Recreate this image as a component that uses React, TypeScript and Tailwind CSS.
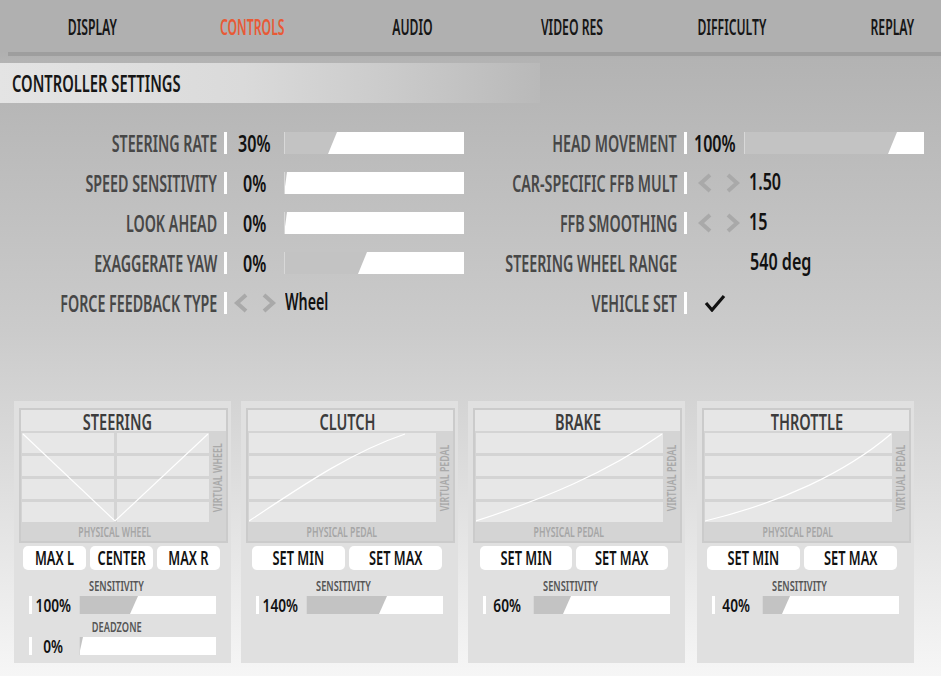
import React from "react";

const F = "font-['Noto_Sans',sans-serif]";

function Slider({ w, h, fill, slant, cls }: { w: number; h: number; fill: number; slant: number; cls: string }) {
  const bottom = Math.max(0, fill - slant);
  return (
    <div className={`relative shrink-0 bg-white ${cls}`}>
      <svg width={w} height={h} className="absolute left-0 top-0 block">
        <polygon points={`0,0 ${fill},0 ${bottom},${h} 0,${h}`} fill="#c3c3c3" />
        <rect x="0" y="0" width="1" height={h} fill="#d8d8d8" />
      </svg>
    </div>
  );
}

function Chevron({ dir }: { dir: "l" | "r" }) {
  return (
    <svg width="16" height="20" viewBox="0 0 16 20" className="block">
      {dir === "l" ? (
        <polyline points="13,2 4,10 13,18" fill="none" stroke="#a9a9a9" strokeWidth="4" />
      ) : (
        <polyline points="3,2 12,10 3,18" fill="none" stroke="#a9a9a9" strokeWidth="4" />
      )}
    </svg>
  );
}

function Sep({ hidden }: { hidden?: boolean }) {
  return <div className={`ml-[7px] shrink-0 w-[3px] h-[22px] ${hidden ? "" : "bg-white"}`} />;
}

function Label({ text }: { text: string }) {
  return (
    <div className="w-[217px] shrink-0 flex justify-end">
      <span className="shrink-0 whitespace-nowrap origin-right scale-x-[0.62] text-[23px] leading-none text-[#474747] font-semibold">
        {text}
      </span>
    </div>
  );
}

function Value({ text }: { text: string }) {
  return (
    <span className="inline-block whitespace-nowrap origin-left scale-x-[0.7] text-[23px] leading-none text-[#111] font-semibold">
      {text}
    </span>
  );
}

function SliderRow({ label, value, fill }: { label: string; value: string; fill: number }) {
  return (
    <div className="flex items-center h-[40px]">
      <Label text={label} />
      <Sep />
      <div className="w-[55px] shrink-0 flex justify-center">
        <span className="shrink-0 whitespace-nowrap scale-x-[0.7] text-[23px] leading-none text-[#111] font-semibold">
          {value}
        </span>
      </div>
      <div className="w-[2px] shrink-0" />
      <Slider w={180} h={22} fill={fill} slant={9} cls="w-[180px] h-[22px]" />
    </div>
  );
}

function ArrowRow({ label, value, ml, wheel }: { label: string; value: string; ml: string; wheel?: boolean }) {
  return (
    <div className="flex items-center h-[40px]">
      <Label text={label} />
      <Sep />
      <div className={`flex items-center ${ml}`}>
        <Chevron dir="l" />
        <div className="ml-[12px]">
          <Chevron dir="r" />
        </div>
        <div className="ml-[8px]">
          {wheel ? (
            <span className="inline-block whitespace-nowrap origin-left scale-x-[0.62] text-[23px] leading-none text-[#111] font-semibold">
              {value}
            </span>
          ) : (
            <Value text={value} />
          )}
        </div>
      </div>
    </div>
  );
}

function Cells({ cols }: { cols: number }) {
  const rows = [0, 1, 2, 3];
  return (
    <div className="flex flex-col gap-[3px]">
      {rows.map((r) =>
        cols === 2 ? (
          <div key={r} className="flex gap-[3px]">
            <div className="w-[92px] h-[20px] bg-[#e7e7e7]" />
            <div className="w-[92px] h-[20px] bg-[#e7e7e7]" />
          </div>
        ) : (
          <div key={r} className="w-[187px] h-[20px] bg-[#e7e7e7]" />
        )
      )}
    </div>
  );
}

function Panel({
  title,
  cols,
  path,
  vlabel,
  hlabel,
  buttons,
  sliders,
  btnCls,
  btnRow,
  titleCls,
  outer,
}: {
  title: string;
  cols: number;
  path: string;
  vlabel: string;
  hlabel: string;
  buttons: string[];
  sliders: { label: string; value: string; fill: number }[];
  btnCls: string;
  btnRow: string;
  titleCls: string;
  outer: string;
}) {
  return (
    <div className={`w-[217px] h-[262px] shrink-0 bg-[#e0e0e0] pt-[7px] pl-[5px] ${outer}`}>
      <div className="w-[209px] h-[135px] border-2 border-[#cbcbcb] bg-[#d4d4d4] flex flex-col">
        <div className={`h-[21px] bg-[#e6e6e6] flex items-center justify-center ${titleCls}`}>
          <span className="shrink-0 whitespace-nowrap scale-x-[0.66] text-[22px] leading-none text-[#3c3c3c] font-semibold">
            {title}
          </span>
        </div>
        <div className="flex pt-[2px]">
          <div className="relative ml-[1px] w-[187px] h-[89px]">
            <Cells cols={cols} />
            <svg width="187" height="89" className="absolute left-0 top-0 block">
              <path d={path} fill="none" stroke="#ffffff" strokeWidth="1.2" />
            </svg>
          </div>
          <div className="w-[17px] h-[89px] flex items-center justify-center">
            <div className="[writing-mode:vertical-rl] rotate-180 flex items-center">
              <span className="shrink-0 whitespace-nowrap scale-y-[0.68] text-[13px] leading-none text-[#a9a9a9] font-semibold">
                {vlabel}
              </span>
            </div>
          </div>
        </div>
        <div className="w-[188px] flex-1 flex items-center justify-center">
          <span className="shrink-0 whitespace-nowrap scale-x-[0.62] text-[14px] leading-none text-[#a6a6a6] font-semibold">
            {hlabel}
          </span>
        </div>
      </div>
      <div className={`flex gap-[4px] mt-[3px] ${btnRow}`}>
        {buttons.map((b) => (
          <div key={b} className={`h-[24px] shrink-0 bg-white rounded-[5px] flex items-center justify-center overflow-visible ${btnCls}`}>
            <span className="shrink-0 whitespace-nowrap scale-x-[0.64] text-[20px] leading-none text-[#111] font-semibold">
              {b}
            </span>
          </div>
        ))}
      </div>
      {sliders.map((s, i) => (
        <div key={s.label} className={i === 0 ? "mt-[8px]" : "mt-[5px]"}>
          <div className="w-[196px] h-[16px] flex items-center justify-center">
            <span className="shrink-0 whitespace-nowrap scale-x-[0.66] text-[14px] leading-none text-[#555] font-semibold">
              {s.label}
            </span>
          </div>
          <div className="flex items-center h-[18px] mt-[2px]">
            <div className="ml-[10px] shrink-0 w-[3px] h-[18px] bg-white" />
            <div className="w-[42px] shrink-0 flex justify-center">
              <span className="shrink-0 whitespace-nowrap scale-x-[0.76] text-[18px] leading-none text-[#111] font-semibold">
                {s.value}
              </span>
            </div>
            <div className="w-[5px] shrink-0" />
            <Slider w={137} h={18} fill={s.fill} slant={8} cls="w-[137px] h-[18px]" />
          </div>
        </div>
      ))}
    </div>
  );
}

export default function App() {
  const tabs = ["DISPLAY", "CONTROLS", "AUDIO", "VIDEO RES", "DIFFICULTY", "REPLAY"];
  return (
    <div
      className={`w-[941px] h-[676px] overflow-hidden bg-[linear-gradient(to_bottom,#b0b0b0_0px,#b0b0b0_52px,#b3b3b3_60px,#cbcbcb_330px,#f6f6f6_676px)] ${F}`}
    >
      <div className="h-[52px] flex items-center pl-[12px] pb-[1px] overflow-hidden">
        {tabs.map((t) => (
          <div key={t} className="w-[160px] shrink-0 flex justify-center">
            <span
              className={`shrink-0 whitespace-nowrap scale-x-[0.555] text-[22px] leading-none font-semibold ${
                t === "CONTROLS" ? "text-[#e85a36]" : "text-[#161616]"
              }`}
            >
              {t}
            </span>
          </div>
        ))}
      </div>
      <div className="ml-[8px] h-[4px] bg-[#9e9e9e]" />
      <div className="mt-[7px] h-[40px] w-[540px] bg-[linear-gradient(to_right,#e4e4e4_0%,#dadada_45%,#c9c9c9_75%,#b9b9b9_100%)] flex items-center pl-[12px]">
        <span className="inline-block whitespace-nowrap origin-left scale-x-[0.64] text-[23px] leading-none text-[#161616] font-semibold">
          CONTROLLER SETTINGS
        </span>
      </div>
      <div className="mt-[20px] grid grid-cols-[460px_1fr]">
        <div className="flex flex-col">
          <SliderRow label="STEERING RATE" value="30%" fill={53} />
          <SliderRow label="SPEED SENSITIVITY" value="0%" fill={3} />
          <SliderRow label="LOOK AHEAD" value="0%" fill={3} />
          <SliderRow label="EXAGGERATE YAW" value="0%" fill={83} />
          <ArrowRow label="FORCE FEEDBACK TYPE" value="Wheel" ml="ml-[6px]" wheel />
        </div>
        <div className="flex flex-col">
          <SliderRow label="HEAD MOVEMENT" value="100%" fill={153} />
          <ArrowRow label="CAR-SPECIFIC FFB MULT" value="1.50" ml="ml-[10px]" />
          <ArrowRow label="FFB SMOOTHING" value="15" ml="ml-[10px]" />
          <div className="flex items-center h-[40px]">
            <Label text="STEERING WHEEL RANGE" />
            <Sep hidden />
            <div className="ml-[63px]">
              <Value text="540 deg" />
            </div>
          </div>
          <div className="flex items-center h-[40px]">
            <Label text="VEHICLE SET" />
            <Sep />
            <svg width="22" height="18" viewBox="0 0 22 18" className="ml-[17px] block">
              <path d="M2 9 L8 16 L20 2" fill="none" stroke="#111" strokeWidth="3.2" strokeLinejoin="miter" />
            </svg>
          </div>
        </div>
      </div>
      <div className="mt-[78px] ml-[14px] flex gap-[10px]">
        <Panel
          title="STEERING"
          titleCls="pr-[12px]"
          outer=""
          cols={2}
          path="M1 1 L93 88 L186 1"
          vlabel="VIRTUAL WHEEL"
          hlabel="PHYSICAL WHEEL"
          buttons={["MAX L", "CENTER", "MAX R"]}
          btnCls="w-[63px]"
          btnRow="ml-[4px]"
          sliders={[
            { label: "SENSITIVITY", value: "100%", fill: 59 },
            { label: "DEADZONE", value: "0%", fill: 4 },
          ]}
        />
        <Panel
          title="CLUTCH"
          titleCls="pr-[6px]"
          outer=""
          cols={1}
          path="M0 88 C50 55 100 20 156 1"
          vlabel="VIRTUAL PEDAL"
          hlabel="PHYSICAL PEDAL"
          buttons={["SET MIN", "SET MAX"]}
          btnCls="w-[93px]"
          btnRow="ml-[6px]"
          sliders={[{ label: "SENSITIVITY", value: "140%", fill: 81 }]}
        />
        <Panel
          title="BRAKE"
          titleCls=""
          outer=""
          cols={1}
          path="M0 88 C70 65 130 40 186 1"
          vlabel="VIRTUAL PEDAL"
          hlabel="PHYSICAL PEDAL"
          buttons={["SET MIN", "SET MAX"]}
          btnCls="w-[92px]"
          btnRow="ml-[7px]"
          sliders={[{ label: "SENSITIVITY", value: "60%", fill: 38 }]}
        />
        <Panel
          title="THROTTLE"
          titleCls=""
          outer="ml-[2px]"
          cols={1}
          path="M0 88 C75 70 140 40 186 1"
          vlabel="VIRTUAL PEDAL"
          hlabel="PHYSICAL PEDAL"
          buttons={["SET MIN", "SET MAX"]}
          btnCls="w-[93px]"
          btnRow="ml-[5px]"
          sliders={[{ label: "SENSITIVITY", value: "40%", fill: 28 }]}
        />
      </div>
    </div>
  );
}
